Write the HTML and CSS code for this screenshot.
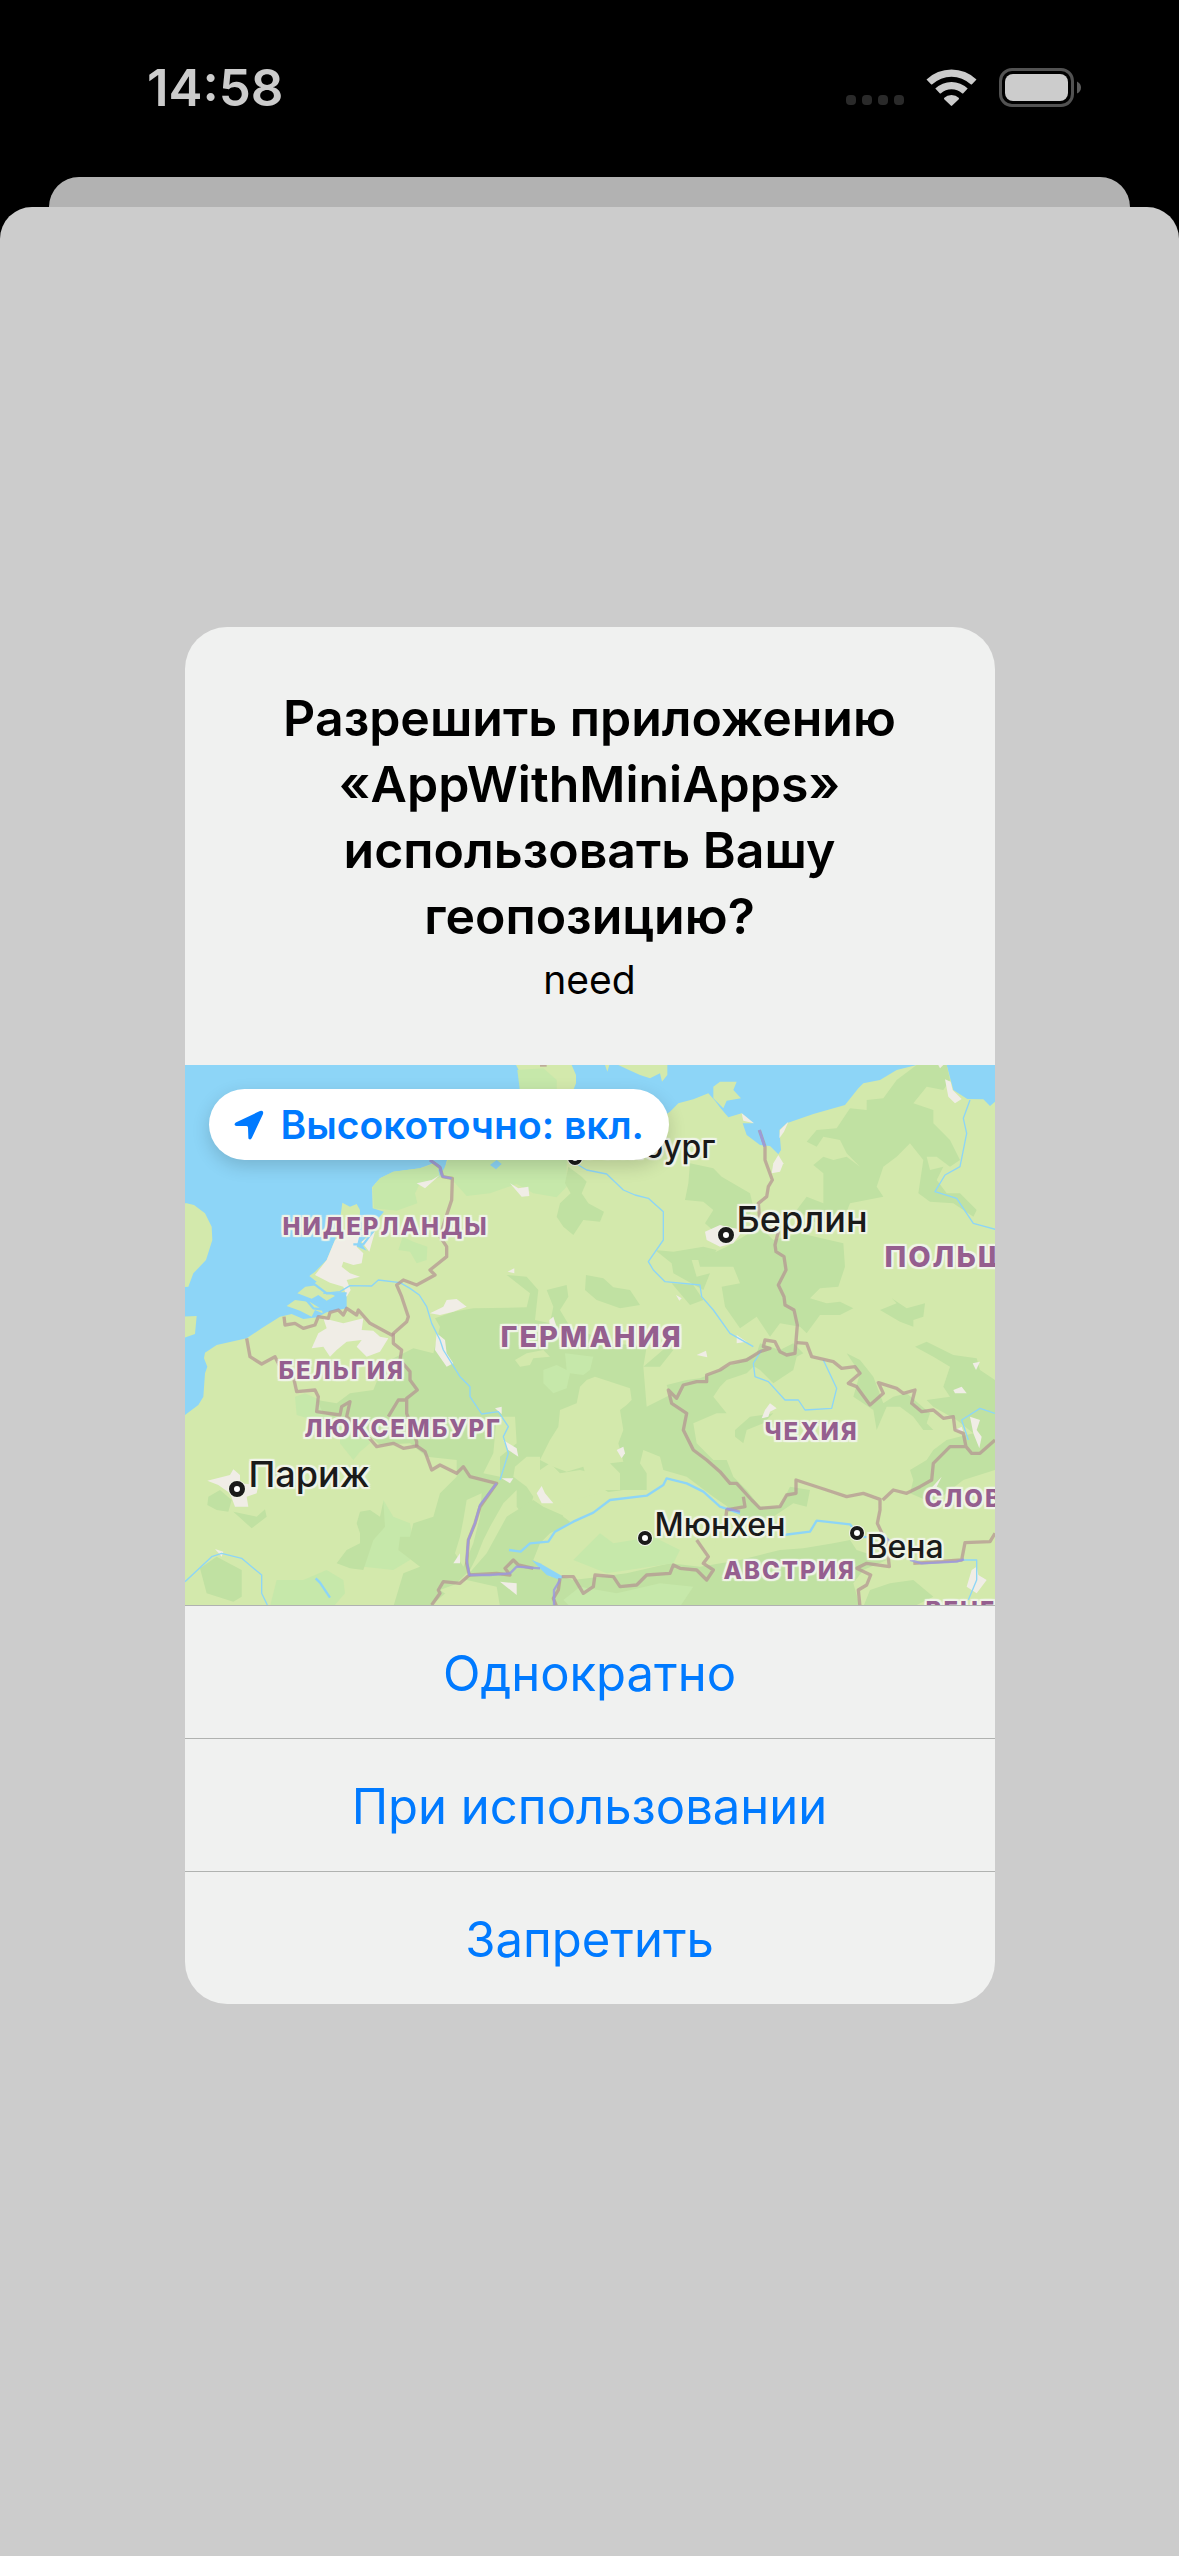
FILE: index.html
```html
<!DOCTYPE html>
<html lang="ru">
<head>
<meta charset="utf-8">
<meta name="viewport" content="width=device-width, initial-scale=1">
<title>Доступ к геопозиции</title>
<link rel="stylesheet" href="styles.css">
</head>
<body>
<div class="screen">
  <header class="status">
    <time class="status-time">14:58</time>
    <div class="status-icons">
      <span class="cellular"><i></i><i></i><i></i><i></i></span>
      <svg class="wifi" viewBox="0 0 51 37" aria-hidden="true">
        <path d="M0.5 10.5A36 36 0 0 1 50.5 10.5L46 15.3A1 1 0 0 1 44.7 15.3A28 28 0 0 0 6.300 15.300A1 1 0 0 1 5 15.300Z"/>
        <path d="M9.300 19.500A23.500 23.500 0 0 1 41.700 19.500L37.300 24.300A1 1 0 0 1 36 24.300A15.500 15.500 0 0 0 15 24.300A1 1 0 0 1 13.700 24.300Z"/>
        <path d="M18 29A11 11 0 0 1 33 29Q33 30 32.500 30.500L26.200 36.600Q25.500 37.200 24.800 36.600L18.500 30.500Q18 30 18 29Z"/>
      </svg>
      <svg class="battery" viewBox="0 0 82 39" aria-hidden="true">
        <rect x="1.500" y="1.500" width="72" height="36" rx="11.500" fill="none" stroke="#525252" stroke-width="3"/>
        <rect x="6" y="6" width="63" height="27" rx="8" fill="#cccccc"/>
        <path d="M78 13.500Q82 15.500 82 19.500T78 25.500Z" fill="#5c5c5c"/>
      </svg>
    </div>
  </header>
  <div class="sheet-back"></div>
  <main class="sheet">
    <section class="alert" role="alertdialog" aria-labelledby="alert-title" aria-describedby="alert-text">
      <div class="alert-head">
        <h1 class="alert-title" id="alert-title">Разрешить приложению «AppWithMiniApps» использовать Вашу геопозицию?</h1>
        <p class="alert-text" id="alert-text">need</p>
      </div>
      <div class="map">
        <svg class="map-art" viewBox="15 15 2430 1620" preserveAspectRatio="xMidYMid slice" aria-hidden="true">
          <rect width="2460" height="1650" fill="#8dd5f7"/>
          <!-- land -->
          <g fill="#d3e9ac">
            <path d="M0 1070L15 1065 55 1035 70 1010 75 940 82 920 72 895 75 878 110 855 200 835 245 805 300 770 335 762 370 777 412 772 440 757 500 745 500 700 440 695 400 672 410 665 388 648 405 635 440 600 465 540 480 480 487 428 510 440 530 432 540 450 538 520 520 555 560 572 542 548 575 515 590 480 612 455 578 445 576 382 600 355 640 335 720 325 760 310 790 350 800 300 880 260 980 240 1022 110 1035 87 1032 60 1008 15 1175 15 1188 45 1188 70 1180 90 1220 200 1400 200 1470 155 1495 130 1540 118 1585 100 1605 122 1622 145 1645 172 1685 160 1720 190 1688 190 1700 225 1740 255 1770 258 1795 283 1803 270 1798 210 1820 190 1900 162 1995 135 2035 85 2050 70 2100 60 2150 30 2210 15 2300 15 2312 60 2320 90 2362 117 2410 118 2430 138 2445 125 2460 125 2460 1650 0 1650Z"/>
            <path d="M0 430L20 430 42 435 75 460 95 500 97 540 78 600 40 640 25 680 0 682Z"/>
            <path d="M0 770L50 768 45 822 0 838Z"/>
            <path d="M320 738L345 720 390 726 425 748 428 760 405 750 395 770 360 752Z"/>
            <path d="M352 700L376 680 410 676 465 708 440 722 415 705 395 716Z"/>
            <path d="M415 672L455 668 480 690 450 694Z"/>
            <path d="M1315 15L1462 15 1462 45 1446 65 1440 40 1410 55 1380 45 1342 28Z"/>
            <path d="M1275 15L1288 15 1282 35Z"/>
            <path d="M1600 80L1620 65 1670 65 1660 90 1683 115 1640 122 1630 145 1600 115Z"/>
          </g>
          <!-- light vegetation -->
          <g fill="#c6e8aa">
            <path d="M578 382L600 355 640 335 720 325 770 310 805 345 720 370 705 400 712 430 650 452 582 445Z"/>
            <path d="M668 530L700 545 742 560 740 600 710 610 690 575 655 570Z"/>
            <path d="M790 330L805 300 1160 300 1160 380 1130 412 1060 400 1010 372 930 400 860 408 835 380Z"/>
            <path d="M1012 30L1090 25 1130 60 1130 95 1020 95Z"/>
            <path d="M345 1010L375 1000 420 1020 450 1070 540 1080 570 1150 540 1175 520 1200 480 1150 480 1120 400 1080 350 1065Z"/>
            <path d="M610 1320L640 1370 690 1390 700 1440 690 1500 640 1530 550 1520 560 1430 600 1400Z"/>
            <path d="M290 1560L370 1560 440 1530 490 1560 495 1600 460 1640 270 1640Z"/>
          </g>
          <!-- woodland -->
          <g fill="#c0e1a2">
            <path d="M1165 320L1155 370 1172 400 1140 430 1130 470 1150 500 1180 525 1210 480 1260 485 1272 455 1225 430 1205 400 1220 365 1205 350Z"/>
            <path d="M1218 645L1215 690 1250 720 1320 745 1380 735 1350 690 1300 682 1270 655Z"/>
            <path d="M1530 310L1600 325 1625 350 1710 400 1720 440 1680 520 1620 530 1575 490 1600 450 1570 425 1515 420 1525 370Z"/>
            <path d="M1425 570L1480 575 1570 560 1610 570 1590 600 1535 600 1550 650 1590 640 1570 690 1480 640 1475 610Z"/>
            <path d="M1475 670L1540 675 1570 720 1530 735Z"/>
            <path d="M1640 560L1740 500 1780 540 1860 520 1990 550 1995 620 1975 680 1920 685 1890 715 1940 730 1980 725 2020 745 1980 765 1920 765 1880 820 1860 800 1800 790 1770 830 1730 770 1680 805 1635 740 1625 680 1680 670 1660 620 1560 620 1555 600Z"/>
            <path d="M2210 15L2300 15 2310 60 2290 90 2240 80 2200 130 2260 150 2260 190 2310 240 2340 300 2310 320 2270 290 2240 290 2250 330 2290 320 2270 360 2300 400 2340 400 2390 450 2380 470 2320 430 2250 425 2215 400 2230 300 2190 250 2150 290 2110 320 2090 380 2110 410 2010 430 1990 480 1910 490 1850 450 1880 410 1930 430 1930 340 1900 315 1930 290 1960 300 2000 290 2040 320 2000 280 1980 240 1930 230 1910 260 1880 245 1910 210 1970 205 2010 145 2060 150 2060 120 2110 115 2150 60Z"/>
            <path d="M2100 750L2150 730 2135 715 2180 745 2235 730 2230 770 2200 780 2200 800 2160 785Z"/>
            <path d="M590 965L600 920 630 900 700 865 760 880 780 800 765 775 820 755 880 745 1040 742 1050 700 980 645 1040 650 1075 690 1065 780 1110 790 1120 740 1100 690 1160 675 1165 710 1140 750 1170 800 1300 850 1400 860 1390 920 1460 860 1480 870 1440 920 1390 920 1400 1040 1470 1005 1460 975 1520 960 1560 955 1620 930 1730 880 1740 850 1800 870 1840 850 1870 880 1850 890 1780 900 1720 920 1700 940 1640 960 1620 980 1600 1010 1640 1060 1610 1060 1575 1075 1540 1090 1550 1150 1600 1200 1640 1200 1660 1250 1700 1290 1740 1340 1800 1340 1830 1280 1890 1290 1880 1340 1840 1330 1780 1370 1700 1380 1600 1310 1520 1250 1450 1230 1440 1190 1390 1170 1380 1210 1400 1240 1400 1290 1330 1310 1290 1300 1260 1280 1240 1240 1200 1230 1140 1240 1110 1210 1080 1230 1080 1190 1040 1190 1005 1220 1000 1250 1040 1280 1060 1310 1040 1380 1010 1340 1010 1290 970 1330 930 1400 910 1440 890 1490 870 1530 830 1570 750 1640 640 1640 670 1540 720 1520 655 1470 660 1430 690 1430 700 1390 760 1370 780 1300 830 1250 830 1200 740 1190 690 1150 600 1155 540 1100 480 1080 430 1060 410 1020 470 1030 510 1000 580 990Z"/>
            <path d="M1060 1320L1090 1340 1180 1380 1150 1400 1110 1420 1080 1450 1060 1500 1110 1540 1180 1560 1260 1550 1340 1540 1470 1510 1560 1520 1680 1500 1760 1480 1800 1470 1870 1465 1960 1450 2010 1440 2030 1470 2120 1500 2050 1530 2020 1570 2040 1640 880 1640 850 1560 920 1480 980 1370Z"/>
            <path d="M470 1510L500 1470 540 1450 540 1420 530 1390 540 1355 570 1350 600 1370 610 1325 615 1400 580 1440 550 1530 510 1525Z"/>
            <path d="M60 1525L110 1490 185 1530 185 1610 160 1625 80 1600Z"/>
            <path d="M85 1310L120 1290 155 1320 145 1355 110 1350 82 1335Z"/>
            <path d="M160 1355L230 1370 255 1348 260 1370 215 1405Z"/>
            <path d="M1700 905L1740 890 1800 880 1850 890 1840 930 1780 970 1740 930Z"/>
            <path d="M2000 880L2040 900 2080 950 2110 1030 2140 1010 2180 1000 2250 1060 2240 1090 2260 1110 2230 1110 2200 1070 2160 1040 2120 1040 2090 1110 2080 1050 2020 1010 2040 940Z"/>
            <path d="M2205 860L2240 845 2320 885 2390 895 2400 930 2445 960 2445 1230 2350 1260 2260 1330 2190 1300 2200 1260 2190 1230 2240 1200 2260 1170 2300 1140 2380 1120 2330 1080 2260 1040 2240 1020 2310 1010 2290 980 2310 920 2260 890Z"/>
            <path d="M1665 1110L1710 1070 1780 1060 1750 1090 1700 1110 1690 1150 1665 1130Z"/>
            <path d="M2070 1590L2130 1570 2200 1560 2260 1610 2200 1640 2050 1640Z"/>
          </g>
          <!-- clearings -->
          <g fill="#d3e9ac">
            <path d="M1140 1050L1190 1030 1200 980 1220 960 1245 950 1350 985 1355 1020 1340 1035 1320 1050 1330 1110 1315 1150 1330 1205 1290 1210 1320 1240 1320 1290 1230 1290 1210 1220 1160 1235 1120 1220 1080 1200 1110 1140 1135 1100Z"/>
            <path d="M1005 900L1040 880 1090 870 1110 890 1060 895 1050 915 1020 920Z"/>
            <path d="M1140 1345L1180 1320 1260 1300 1330 1290 1420 1290 1560 1290 1620 1340 1600 1490 1480 1500 1400 1520 1300 1500 1200 1510 1110 1550 1065 1500 1100 1440 1190 1400 1150 1370Z"/>
            <path d="M780 1590L860 1560 950 1580 960 1640 850 1640Z"/>
            <path d="M860 1320L905 1300 900 1370 880 1450 850 1520 825 1480 840 1430 850 1380Z"/>
            <path d="M950 1070L1005 1070 1010 1150 960 1190 960 1250 910 1240 940 1180Z"/>
          </g>
          <g fill="#c6e8aa">
            <path d="M1090 930L1130 915 1160 930 1155 880 1240 890 1230 930 1210 945 1170 940 1160 985 1120 1000 1090 970Z"/>
            <path d="M1180 1500L1260 1420 1300 1450 1360 1440 1420 1430 1500 1470 1480 1510 1280 1540Z"/>
            <path d="M1150 1620L1200 1580 1310 1600 1440 1570 1540 1580 1500 1640 1170 1640Z"/>
          </g>
          <!-- built-up areas -->
          <g fill="#f0ede6">
            <path d="M465 540L515 500 540 520 530 560 550 580 545 610 520 615 490 605 485 620 510 640 540 650 500 660 512 690 500 710 490 680 450 668 405 645 440 600Z"/>
            <path d="M545 545L585 515 575 550 568 575Z"/>
            <path d="M710 370L755 360 780 345 735 385Z"/>
            <path d="M750 760L790 740 800 720 830 717 860 740 820 755 780 765Z"/>
            <path d="M430 775L490 790 550 775 545 810 580 812 600 830 625 835 600 875 560 890 530 860 545 840 500 845 470 870 450 890 430 860 395 865 415 820 440 805Z"/>
            <path d="M770 820L795 840 800 880 820 910 800 920 765 870Z"/>
            <path d="M82 1262L150 1245 160 1228 180 1245 180 1270 235 1275 230 1300 200 1310 205 1340 165 1340 150 1300 115 1275Z"/>
            <path d="M1575 515L1620 495 1640 500 1690 510 1660 550 1620 560 1580 540Z"/>
            <path d="M1795 285L1810 310 1800 335 1775 340 1780 310Z"/>
            <path d="M1800 210L1825 185 1812 215 1798 235Z"/>
            <path d="M1685 160L1700 172 1722 190 1690 182Z"/>
            <path d="M2295 58L2312 65 2318 90 2345 117 2325 130 2305 110Z"/>
            <path d="M2275 15L2290 15 2280 25Z"/>
            <path d="M990 370L1015 385 1045 380 1048 408 1025 410Z"/>
            <path d="M983 635L1003 625 1003 640Z"/>
            <path d="M1070 1300L1085 1278 1095 1300 1120 1330 1085 1330Z"/>
            <path d="M970 1140L1010 1165 1015 1190 985 1170Z"/>
            <path d="M1310 1170L1330 1160 1335 1180 1325 1195Z"/>
            <path d="M1550 885L1578 872 1582 892Z"/>
            <path d="M1755 1050L1770 1030 1790 1045 1770 1055 1765 1070 1745 1075Z"/>
            <path d="M2230 1310L2285 1250 2270 1280 2270 1300Z"/>
            <path d="M2320 990L2345 980 2360 1000 2325 1000Z"/>
            <path d="M2378 910L2400 905 2388 930Z"/>
            <path d="M2370 1070L2400 1080 2390 1110 2405 1130 2398 1165 2380 1120Z"/>
            <path d="M2360 1580L2375 1530 2390 1520 2395 1545 2420 1560 2390 1600Z"/>
            <path d="M2325 1110L2345 1100 2350 1115Z"/>
            <path d="M1670 825L1700 845 1670 850Z"/>
            <path d="M965 1255L1000 1255 990 1270Z"/>
            <path d="M960 1565L1010 1570 1010 1605Z"/>
            <path d="M105 1467L130 1475 125 1490Z"/>
            <path d="M820 1510L840 1480 840 1510Z"/>
            <path d="M945 1045L965 1040 965 1062Z"/>
            <path d="M1108 780L1120 770 1128 795 1110 810Z"/>
            <path d="M1488 705L1505 715 1498 722Z"/>
          </g>
          <!-- water inlets, lakes -->
          <g fill="#8dd5f7">
            <path d="M930 315L950 300 965 312 948 328Z"/>
            <path d="M1055 1500L1080 1510 1150 1550 1140 1560 1100 1545Z"/>
            <path d="M780 350L800 300 790 300 775 330Z"/>
          </g>
          <!-- rivers -->
          <g fill="none" stroke="#8dd5f7" stroke-width="4" stroke-linejoin="round">
            <path d="M430 700L480 695 510 677 575 678 595 660 660 668 690 685 718 705 740 740 755 790 780 840 790 870 840 950 870 980 870 1010 905 1062 955 1055 985 1100 970 1130 985 1180 960 1260"/>
            <path d="M1195 315L1220 330 1280 342 1330 390 1365 405 1405 415 1450 455 1450 540 1405 605 1420 630 1455 665 1560 675 1565 710 1600 750 1650 820 1720 860"/>
            <path d="M2370 120L2350 175 2360 220 2340 320 2295 345 2265 395 2330 415 2380 490 2460 512"/>
            <path d="M1745 870L1720 910 1725 950 1765 965 1815 1020 1855 1020 1875 1050 1955 1045 1970 985 1930 900"/>
            <path d="M15 1565L95 1490 125 1480 185 1495 245 1545 245 1600 262 1635"/>
            <path d="M2445 1060L2400 1045 2345 1080 2365 1140"/>
            <path d="M2345 1500L2390 1500 2390 1560 2365 1620"/>
          </g>
          <g fill="none" stroke="#8dd5f7" stroke-width="7" stroke-linejoin="round">
            <path d="M987 1470L1022 1475 1050 1450 1105 1445 1125 1415 1180 1385 1240 1358 1290 1320 1400 1307 1450 1275 1460 1255 1520 1270 1570 1295 1620 1340 1680 1360M1810 1425L1890 1415 1910 1382 2010 1393 2040 1430 2110 1435"/>
            <path d="M407 1555L420 1568 450 1613"/>
            <path d="M520 553L550 553 590 500M400 670L440 700 500 700M375 715L400 745 440 750"/>
          </g>
          <!-- state borders -->
          <g fill="none" stroke="#b38f91" stroke-opacity=".68" stroke-width="10" stroke-linejoin="round">
            <path d="M750 300L780 322 788 350 817 355 815 420 795 480 780 530 800 560 800 590 750 630 765 645 710 675 670 660 650 675 665 710 685 770 680 785 635 825 570 790 535 750 530 765 500 745 490 765 475 750 450 757 445 775 415 770 405 795 370 805 345 790 315 795 312 770"/>
            <path d="M200 835L210 890 245 912 285 890 305 930 340 950 350 995 405 990 415 1010 410 1055 480 1065 485 1040 510 1025 500 1070 560 1125 590 1160 640 1150 670 1165 710 1158 735 1175 755 1230 780 1215 830 1240 850 1220 870 1250 950 1270 900 1340 885 1390 865 1440 860 1510 868 1545 840 1570 790 1565 775 1590 780 1600 755 1635"/>
            <path d="M640 820L640 850 665 870 660 900 690 935 690 960 712 990 680 1015 680 1060 710 1145 710 1160M680 1020L655 1020 625 1070"/>
            <path d="M868 1545L950 1540 990 1545 975 1525 1000 1500 1015 1515 1060 1525M1145 1550L1180 1550 1210 1600 1240 1580 1245 1545 1300 1550 1320 1580 1370 1575 1400 1545 1470 1540 1480 1515 1500 1525 1550 1530 1580 1560 1600 1530 1570 1510 1585 1490 1550 1440M1140 1555L1135 1590 1120 1615 1130 1640"/>
            <path d="M1738 210L1755 260 1755 300 1777 360 1765 380 1760 410 1735 430 1740 490 1795 515 1785 555 1788 575 1812 590 1818 630 1795 675 1812 710 1815 735 1842 750 1852 795 1845 880 1820 885 1800 875 1785 845 1755 840 1750 860 1770 865 1740 875 1700 900 1650 910 1620 930 1580 945 1580 965 1550 965 1510 975 1490 1015 1465 990 1475 1030 1520 1060 1510 1110 1540 1170 1580 1200 1620 1235 1650 1270 1670 1270 1715 1320 1740 1345 1800 1340 1820 1305 1848 1300 1848 1260 1940 1290 2000 1310 2050 1300 2100 1318 2100 1350 2092 1390 2120 1450 2128 1520 2060 1510 2030 1525 2072 1545 2060 1575 2035 1590 2040 1640"/>
            <path d="M1850 848L1880 850 1895 890 1960 905 1985 925 2025 920 2040 940 2005 970 2030 980 2070 1035 2110 1000 2095 968 2150 985 2170 1000 2205 990 2195 1030 2225 1055 2260 1050 2290 1075 2320 1070 2325 1110 2350 1120 2358 1160 2310 1160 2260 1210 2255 1260 2220 1280 2180 1300 2140 1290 2108 1320M2358 1160L2375 1180 2400 1180 2445 1140"/>
            <path d="M1690 1310L1695 1340 1640 1350 1638 1370M2445 1420L2430 1445 2355 1448 2345 1500 2200 1510"/>
            <path d="M1080 15L1100 15"/>
          </g>
          <!-- borders that follow water -->
          <g fill="none" stroke="#9a97e2" stroke-opacity=".8" stroke-width="7" stroke-linejoin="round">
            <path d="M950 1270L900 1335 885 1390 865 1440 860 1500 868 1545 930 1545 990 1540 1010 1520 1080 1525"/>
            <path d="M1140 1560L1122 1590 1122 1635M750 300L780 322 788 350 815 355M1738 210L1754 260M1640 1345L1680 1355M2190 1500L2225 1510 2330 1505 2352 1498M2110 1425L2130 1445"/>
          </g>
        </svg>
        <span class="city small hamburg">Гамбург</span>
        <span class="dot at-hamburg"></span>
        <span class="city berlin">Берлин</span>
        <span class="dot large at-berlin"></span>
        <span class="city paris">Париж</span>
        <span class="dot large at-paris"></span>
        <span class="city small munich">Мюнхен</span>
        <span class="dot at-munich"></span>
        <span class="city small vienna">Вена</span>
        <span class="dot at-vienna"></span>
        <span class="country netherlands">НИДЕРЛАНДЫ</span>
        <span class="country big poland">ПОЛЬША</span>
        <span class="country big germany">ГЕРМАНИЯ</span>
        <span class="country belgium">БЕЛЬГИЯ</span>
        <span class="country luxembourg">ЛЮКСЕМБУРГ</span>
        <span class="country czechia">ЧЕХИЯ</span>
        <span class="country slovakia">СЛОВАКИЯ</span>
        <span class="country austria">АВСТРИЯ</span>
        <span class="country hungary">ВЕНГРИЯ</span>
        <button class="precise" type="button">
          <svg class="arrow" viewBox="0 0 30 30" aria-hidden="true"><path d="M1.800 12.500L26 1Q30 0 29 4L17.800 28Q16.500 30.500 14.400 28.500L14 17.500Q14 16 12.500 16L2.500 16Q-1 15 1.800 12.500Z"/></svg>
          Высокоточно: вкл.
        </button>
      </div>
      <div class="actions">
        <button class="action" type="button">Однократно</button>
        <button class="action" type="button">При использовании</button>
        <button class="action" type="button">Запретить</button>
      </div>
    </section>
  </main>
</div>
</body>
</html>
```
FILE: styles.css
```css
* {
  box-sizing: border-box;
}

body {
  margin: 0;
  background: #000;
  font-family: Inter, "Liberation Sans", sans-serif;
}

button {
  border: 0;
  font-family: inherit;
  cursor: pointer;
}

.screen {
  display: flex;
  flex-direction: column;
  min-height: 100vh;
}

/* Status bar */

.status {
  display: flex;
  justify-content: space-between;
  align-items: center;
  height: 177px;
  padding: 0 98px 2px 147px;
  color: #ccc;
}

.status-time {
  font-size: 51px;
  font-weight: 600;
  line-height: 60px;
}

.status-icons {
  display: flex;
  align-items: center;
  gap: 22px;
}

.cellular {
  display: flex;
  align-self: flex-end;
  gap: 6px;
  padding-bottom: 2px;
}

.cellular i {
  width: 10px;
  height: 10px;
  border-radius: 4px;
  background: #2a2a2a;
}

.wifi {
  width: 51px;
  height: 37px;
  fill: #ccc;
}

.battery {
  width: 82px;
  height: 39px;
}

/* Stacked sheets */

.sheet-back {
  height: 60px;
  margin: 0 49px -30px;
  border-radius: 30px 30px 0 0;
  background: #b2b2b2;
}

.sheet {
  display: flex;
  flex: 1;
  align-items: center;
  justify-content: center;
  padding: 0 32px 132px;
  border-radius: 32px 32px 0 0;
  background: #ccc;
  z-index: 1;
}

/* Alert */

.alert {
  width: 100%;
  max-width: 810px;
  overflow: hidden;
  border-radius: 42px;
  background: #f0f1f0;
}

.alert-head {
  padding: 58px 72px 61px;
  text-align: center;
  color: #000;
}

.alert-title {
  margin: 0 0 7px;
  font-size: 50px;
  font-weight: 600;
  line-height: 66px;
}

.alert-text {
  margin: 0;
  font-size: 39px;
  line-height: 48px;
}

/* Map preview */

.map {
  position: relative;
  overflow: hidden;
  height: 540px;
}

.map-art {
  display: block;
  width: 100%;
  height: 100%;
}

.precise {
  position: absolute;
  top: 24px;
  left: 24px;
  display: flex;
  align-items: center;
  gap: 17px;
  height: 71px;
  padding: 0 25px;
  border-radius: 36px;
  background: #fff;
  box-shadow: 0 6px 18px rgba(0, 0, 0, .16);
  color: #007aff;
  font-size: 39px;
  font-weight: 600;
  line-height: 48px;
  white-space: nowrap;
}

.arrow {
  width: 30px;
  height: 30px;
  fill: #007aff;
}

.country,
.city {
  position: absolute;
  line-height: 40px;
  white-space: nowrap;
  text-shadow:
    2px 0 1px #f0f4e8, -2px 0 1px #f0f4e8,
    0 2px 1px #f0f4e8, 0 -2px 1px #f0f4e8,
    2px 2px 1px #f0f4e8, -2px -2px 1px #f0f4e8,
    2px -2px 1px #f0f4e8, -2px 2px 1px #f0f4e8;
}

.country {
  color: #955f8f;
  font-size: 24px;
  font-weight: 800;
  letter-spacing: 2px;
}

.country.big {
  font-size: 29px;
}

.city {
  color: #1a1a1a;
  font-size: 36px;
  font-weight: 500;
}

.city.small {
  font-size: 32px;
}

.dot {
  position: absolute;
  width: 14px;
  height: 14px;
  border: 4px solid #1a1a1a;
  border-radius: 50%;
  background: #fff;
  box-shadow: 0 0 0 1px #f0f4e8;
}

.dot.large {
  width: 16px;
  height: 16px;
  border-width: 5px;
}

.hamburg { left: 400px; top: 62px; }
.at-hamburg { left: 383px; top: 86px; }
.berlin { left: 552px; top: 134px; }
.at-berlin { left: 533px; top: 162px; }
.paris { left: 64px; top: 389px; }
.at-paris { left: 44px; top: 416px; }
.munich { left: 470px; top: 440px; }
.at-munich { left: 453px; top: 466px; }
.vienna { left: 682px; top: 462px; }
.at-vienna { left: 665px; top: 461px; }
.netherlands { left: 98px; top: 142px; }
.poland { left: 700px; top: 172px; }
.germany { left: 316px; top: 252px; }
.belgium { left: 94px; top: 286px; }
.luxembourg { left: 120px; top: 344px; }
.czechia { left: 580px; top: 347px; }
.slovakia { left: 740px; top: 414px; }
.austria { left: 539px; top: 486px; }
.hungary { left: 741px; top: 526px; }

/* Actions */

.actions {
  display: flex;
  flex-direction: column;
}

.action {
  height: 133px;
  padding: 3px 24px 0;
  border-top: 1px solid #b0b2b0;
  background: none;
  color: #007aff;
  font-size: 49px;
  font-weight: 400;
  line-height: 66px;
}
```
